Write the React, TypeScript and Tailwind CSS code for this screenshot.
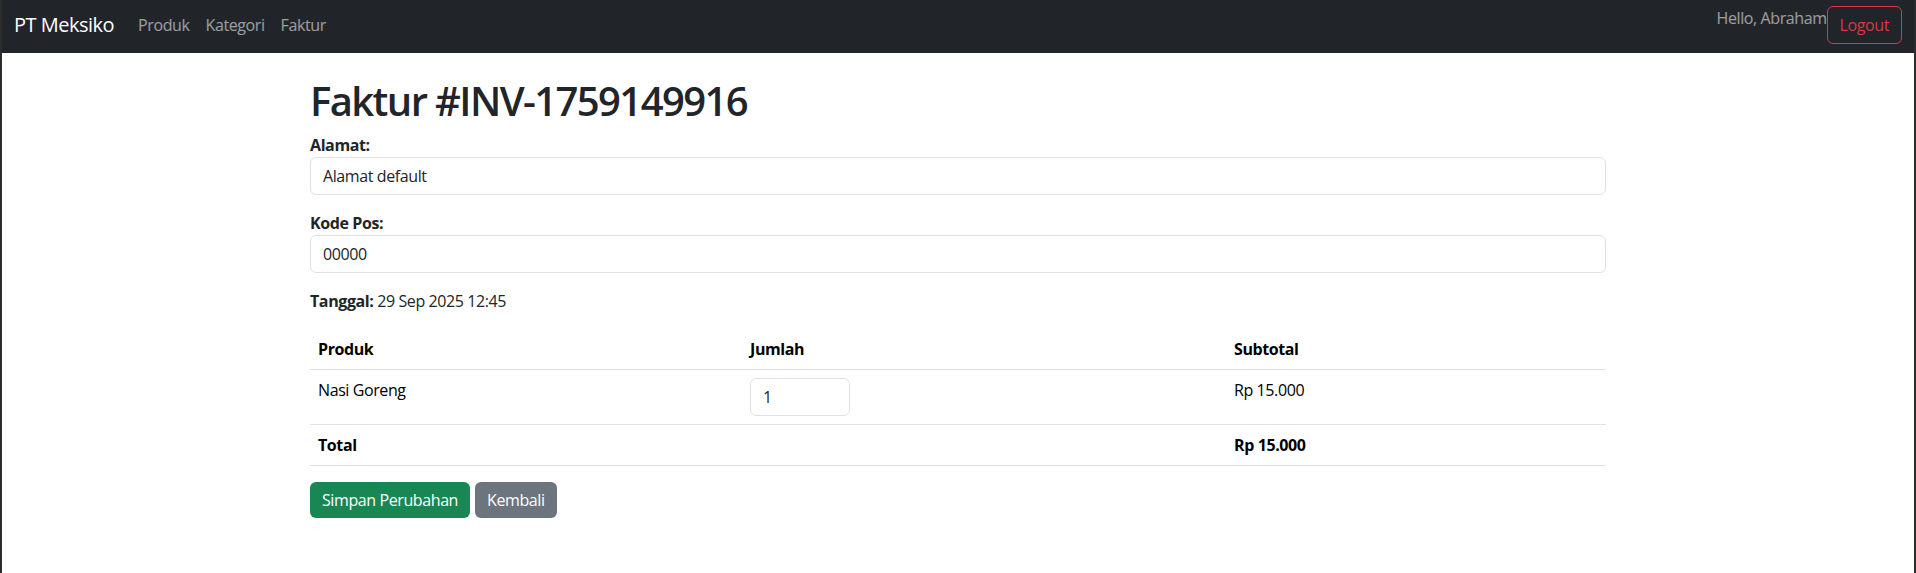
import React from "react";

export default function App() {
  return (
    <div className="min-h-[573px] border-x-2 border-[#2d2d2d] bg-white font-['Open_Sans',sans-serif] text-base tracking-[-0.4px] text-[#212529]">
      <nav className="flex h-[53px] items-start justify-between bg-[#212529] px-3 pt-[6px]">
        <div className="flex h-[38px] items-center">
          <span className="mr-4 text-[20px] leading-[30px] tracking-[-0.5px] text-white">PT Meksiko</span>
          <a className="px-2 leading-6 text-white/55">Produk</a>
          <a className="px-2 leading-6 text-white/55">Kategori</a>
          <a className="px-2 leading-6 text-white/55">Faktur</a>
        </div>
        <div className="flex items-start">
          <span className="leading-6 text-white/55">Hello, Abraham</span>
          <button className="rounded-md border border-[#dc3545] px-3 py-1.5 leading-6 text-[#dc3545]">Logout</button>
        </div>
      </nav>
      <main className="mx-auto w-[1296px] pt-6">
        <h1 className="mb-2 text-[40px] font-semibold leading-[1.2] tracking-[-1.6px]">Faktur #INV-1759149916</h1>
        <div className="mb-4">
          <label className="block font-bold leading-6">Alamat:</label>
          <input
            className="block h-[38px] w-full rounded-md border border-[#dee2e6] px-3 leading-6 tracking-[-0.4px] outline-none"
            defaultValue="Alamat default"
          />
        </div>
        <div className="mb-4">
          <label className="block font-bold leading-6">Kode Pos:</label>
          <input
            className="block h-[38px] w-full rounded-md border border-[#dee2e6] px-3 leading-6 tracking-[-0.4px] outline-none"
            defaultValue="00000"
          />
        </div>
        <p className="mb-4 leading-6">
          <strong className="font-bold">Tanggal:</strong> 29 Sep 2025 12:45
        </p>
        <table className="mb-4 w-full border-collapse text-left text-black">
          <colgroup>
            <col className="w-[432px]" />
            <col className="w-[484px]" />
            <col />
          </colgroup>
          <thead>
            <tr>
              <th className="border-b border-[#dee2e6] p-2 align-top font-bold leading-6">Produk</th>
              <th className="border-b border-[#dee2e6] p-2 align-top font-bold leading-6">Jumlah</th>
              <th className="border-b border-[#dee2e6] p-2 align-top font-bold leading-6">Subtotal</th>
            </tr>
          </thead>
          <tbody>
            <tr>
              <td className="border-b border-[#dee2e6] p-2 align-top leading-6">Nasi Goreng</td>
              <td className="border-b border-[#dee2e6] p-2 align-top leading-6">
                <input
                  className="block h-[38px] w-[100px] rounded-md border border-[#dee2e6] px-3 leading-6 text-[#212529] outline-none"
                  defaultValue="1"
                />
              </td>
              <td className="border-b border-[#dee2e6] p-2 align-top leading-6">Rp 15.000</td>
            </tr>
            <tr>
              <td className="border-b border-[#dee2e6] p-2 align-top font-bold leading-6">Total</td>
              <td className="border-b border-[#dee2e6] p-2 align-top leading-6"></td>
              <td className="border-b border-[#dee2e6] p-2 align-top font-bold leading-6">Rp 15.000</td>
            </tr>
          </tbody>
        </table>
        <div className="flex gap-[5px]">
          <button className="rounded-md bg-[#198754] px-3 py-1.5 leading-6 text-white">Simpan Perubahan</button>
          <button className="rounded-md bg-[#6c757d] px-3 py-1.5 leading-6 text-white">Kembali</button>
        </div>
      </main>
    </div>
  );
}
